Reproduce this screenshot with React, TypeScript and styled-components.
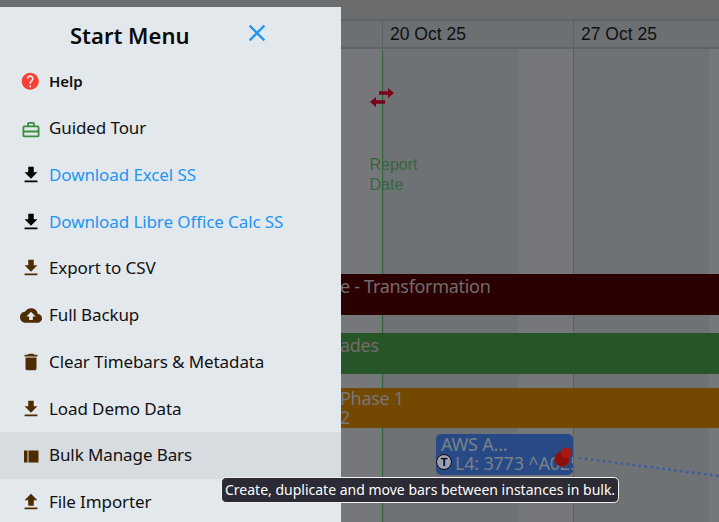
import styled, { createGlobalStyle } from "styled-components";
import {
  MdClose,
  MdCloudUpload,
  MdDelete,
  MdFileDownload,
  MdFileUpload,
  MdHelp,
} from "react-icons/md";

const GlobalStyle = createGlobalStyle`
  html, body {
    margin: 0;
    padding: 0;
    overflow: hidden;
    background: #6b6c6e;
  }
`;

const Page = styled.div`
  position: relative;
  width: 719px;
  height: 522px;
  overflow: hidden;
  padding-left: 341px;
  box-sizing: border-box;
  display: flex;
  flex-direction: column;
`;

const TopStrip = styled.div`
  height: 19px;
  flex: none;
  background: #6b6c6e;
  border-bottom: 2px solid #5d6369;
`;

const DateRow = styled.div`
  height: 26px;
  flex: none;
  display: flex;
  padding-left: 41px;
  background: #6c7073;
  border-bottom: 2px solid #5d6369;
`;

const DateCell = styled.div`
  width: 191px;
  flex: none;
  box-sizing: border-box;
  padding: 2px 0 0 7px;
  border-left: 1px solid #596068;
  font: 17.5px/22px "Liberation Sans", Arial, sans-serif;
  color: #0f1112;
`;

const Chart = styled.div`
  position: relative;
  flex: 1;
  display: flex;
  flex-direction: column;
  padding-top: 225px;
`;

const Weeks = styled.div`
  position: absolute;
  inset: 0;
  display: flex;
  padding-left: 41px;
  background: #76777a;
`;

const Week = styled.div`
  width: 191px;
  flex: none;
  box-sizing: border-box;
  border-left: 1px solid #596068;
  background: linear-gradient(to right, #6f7274 0, #6f7274 135px, #76777a 135px);
`;

const Bar = styled.div<{ $color: string; $height: number; $gap: number }>`
  position: relative;
  flex: none;
  height: ${(p) => p.$height}px;
  margin-bottom: ${(p) => p.$gap}px;
  background: ${(p) => p.$color};
  font: 18px/20px "Noto Sans", sans-serif;
  letter-spacing: -0.3px;
  color: #77767a;
`;

const BarLines = styled.div`
  padding-top: 1px;
  margin-left: -1px;
`;

const BarLine = styled.div`
  height: 19px;
  line-height: 19px;
  white-space: nowrap;
`;

const DarkBarText = styled.div`
  padding: 2px 0 0 0;
  margin-left: -1px;
  color: #746c6c;
`;

const TaskRow = styled.div`
  position: relative;
  flex: none;
  padding-left: 95px;
`;

const Task = styled.div`
  position: relative;
  width: 137px;
  height: 41px;
  box-sizing: border-box;
  padding: 1px 0 0 5px;
  border-radius: 5px;
  background: #274a86;
  color: #7c8088;
  font: 18px/20px "Noto Sans", sans-serif;
  letter-spacing: -0.2px;
  overflow: hidden;
  white-space: nowrap;
`;

const TaskLine = styled.div<{ $indent?: number }>`
  height: 19px;
  line-height: 19px;
  padding-left: ${(p) => p.$indent ?? 0}px;
`;

const Badge = styled.div`
  position: absolute;
  left: 95px;
  top: 20px;
  width: 14px;
  height: 14px;
  border: 1.5px solid #0c0c0c;
  border-radius: 50%;
  background: #9aa0b4;
  color: #000;
  font: 700 11px/14px "Liberation Sans", sans-serif;
  text-align: center;
`;

const Pin = styled.svg`
  position: absolute;
  left: 212px;
  top: 10px;
  width: 24px;
  height: 26px;
`;

const Dotted = styled.svg`
  position: absolute;
  left: 236px;
  top: 23px;
  width: 142px;
  height: 24px;
`;

const ReportLine = styled.div`
  position: absolute;
  left: 41px;
  top: 2px;
  bottom: 0;
  width: 1px;
  background: #2a6a30;
  box-shadow: 0 0 1px #2a6a30;
`;

const ReportLabel = styled.div`
  position: absolute;
  left: 29px;
  top: 106px;
  margin-left: -0.5px;
  font: 16px/20px "Liberation Sans", Arial, sans-serif;
  color: #37663b;
`;

const Swap = styled.svg`
  position: absolute;
  left: 28px;
  top: 38px;
  width: 26px;
  height: 21px;
`;

const Drawer = styled.aside`
  position: absolute;
  left: 0;
  top: 7px;
  bottom: 0;
  width: 341px;
  background: #e3e8ec;
  font-family: "Noto Sans", "Open Sans", sans-serif;
  overflow: hidden;
`;

const DrawerHead = styled.div`
  position: relative;
  height: 51px;
  padding-top: 11px;
  box-sizing: border-box;
  padding-left: 70px;
  font-size: 22px;
  line-height: 34px;
  font-weight: 600;
  color: #0c0c0c;
`;

const CloseButton = styled.button`
  position: absolute;
  left: 243px;
  top: 12px;
  width: 28px;
  height: 28px;
  padding: 0;
  border: 0;
  background: none;
  color: #2196f3;
  font-size: 28px;
  line-height: 0;
`;

const Item = styled.div<{ $active?: boolean }>`
  height: 46.75px;
  display: flex;
  align-items: center;
  padding-left: 19.5px;
  background: ${(p) => (p.$active ? "#d7dce0" : "transparent")};
`;

const IconSlot = styled.span<{ $color: string; $size?: number }>`
  width: 22px;
  height: 22px;
  flex: none;
  margin-right: 7.5px;
  display: flex;
  align-items: center;
  justify-content: center;
  color: ${(p) => p.$color};
  font-size: ${(p) => p.$size ?? 22}px;
`;

const Label = styled.span<{ $link?: boolean; $strong?: boolean }>`
  margin-bottom: ${(p) => (p.$strong ? 0 : 1)}px;
  font-size: ${(p) => (p.$strong ? 15 : 17)}px;
  font-weight: ${(p) => (p.$strong ? 600 : 400)};
  letter-spacing: ${(p) => (p.$strong ? 0 : -0.1)}px;
  color: ${(p) => (p.$link ? "#2196f3" : "#111")};
  white-space: nowrap;
`;

const Tooltip = styled.div`
  position: absolute;
  left: 221px;
  top: 477px;
  width: 398px;
  height: 26px;
  box-sizing: border-box;
  padding-left: 3px;
  border: 1px solid #f2f2f2;
  border-radius: 5px;
  background: #2b2a35;
  color: #fff;
  font: 14px/24px "Noto Sans", sans-serif;
  white-space: nowrap;
`;

const BROWN = "#4e2c00";

const BulkIcon = () => (
  <svg width="22" height="22" viewBox="0 0 22 22" fill="currentColor">
    <rect x="4" y="6.500" width="3.500" height="12" />
    <rect x="8.500" y="6.500" width="10" height="12" />
  </svg>
);

const CaseIcon = () => (
  <svg width="22" height="22" viewBox="0 0 22 22" fill="none" stroke="currentColor" strokeWidth="1.800">
    <rect x="3.400" y="9.400" width="15.200" height="10" rx="1" />
    <path d="M8 9.400V6.900a1 1 0 0 1 1-1h4a1 1 0 0 1 1 1v2.500M3.400 14.500h15.200" />
  </svg>
);

const menu = [
  { label: "Help", strong: true, color: "#f44336", size: 20.5, icon: <MdHelp /> },
  { label: "Guided Tour", color: "#388e3c", icon: <CaseIcon /> },
  { label: "Download Excel SS", link: true, color: "#000", icon: <MdFileDownload /> },
  { label: "Download Libre Office Calc SS", link: true, color: "#000", icon: <MdFileDownload /> },
  { label: "Export to CSV", color: BROWN, icon: <MdFileDownload /> },
  { label: "Full Backup", color: BROWN, icon: <MdCloudUpload size={25} /> },
  { label: "Clear Timebars & Metadata", color: BROWN, icon: <MdDelete /> },
  { label: "Load Demo Data", color: BROWN, icon: <MdFileDownload /> },
  { label: "Bulk Manage Bars", color: BROWN, icon: <BulkIcon />, active: true },
  { label: "File Importer", color: BROWN, icon: <MdFileUpload /> },
];

export default function App() {
  return (
    <Page>
      <GlobalStyle />
      <TopStrip />
      <DateRow>
        <DateCell>20 Oct 25</DateCell>
        <DateCell>27 Oct 25</DateCell>
      </DateRow>
      <Chart>
        <Weeks>
          <Week />
          <Week />
        </Weeks>
        <ReportLine />
        <Swap viewBox="0 0 26 21" fill="#7a0019">
          <path d="M10 4.200h9V1l6 5-6 5V7.800h-9z" />
          <path d="M16 13.200H7V10l-6 5 6 5v-3.200h9z" />
        </Swap>
        <ReportLabel>
          Report
          <br />
          Date
        </ReportLabel>
        <Bar $color="#2a0000" $height={41} $gap={18}>
          <DarkBarText>e - Transformation</DarkBarText>
        </Bar>
        <Bar $color="#265528" $height={41} $gap={14}>
          <DarkBarText>ades</DarkBarText>
        </Bar>
        <Bar $color="#734800" $height={40} $gap={6}>
          <BarLines>
            <BarLine>Phase 1</BarLine>
            <BarLine>2</BarLine>
          </BarLines>
        </Bar>
        <TaskRow>
          <Task>
            <TaskLine>AWS A...</TaskLine>
            <TaskLine $indent={14}>L4: 3773 ^A025</TaskLine>
          </Task>
          <Badge>T</Badge>
          <Pin viewBox="0 0 24 26">
            <path d="M6 12l9 7-5 5z" fill="#6e0c08" />
            <circle cx="9" cy="15" r="7.500" fill="#8e0f0a" />
            <circle cx="13.500" cy="9" r="5.500" fill="#a51a12" />
          </Pin>
          <Dotted viewBox="0 0 142 24">
            <path d="M2 1L142 19" stroke="#3a5e9c" strokeWidth="2.500" strokeDasharray="2.500 3.500" fill="none" />
          </Dotted>
        </TaskRow>
      </Chart>
      <Drawer>
        <DrawerHead>
          Start Menu
          <CloseButton aria-label="Close">
            <MdClose />
          </CloseButton>
        </DrawerHead>
        {menu.map((m) => (
          <Item key={m.label} $active={m.active}>
            <IconSlot $color={m.color} $size={m.size}>
              {m.icon}
            </IconSlot>
            <Label $link={m.link} $strong={m.strong}>
              {m.label}
            </Label>
          </Item>
        ))}
      </Drawer>
      <Tooltip>Create, duplicate and move bars between instances in bulk.</Tooltip>
    </Page>
  );
}
